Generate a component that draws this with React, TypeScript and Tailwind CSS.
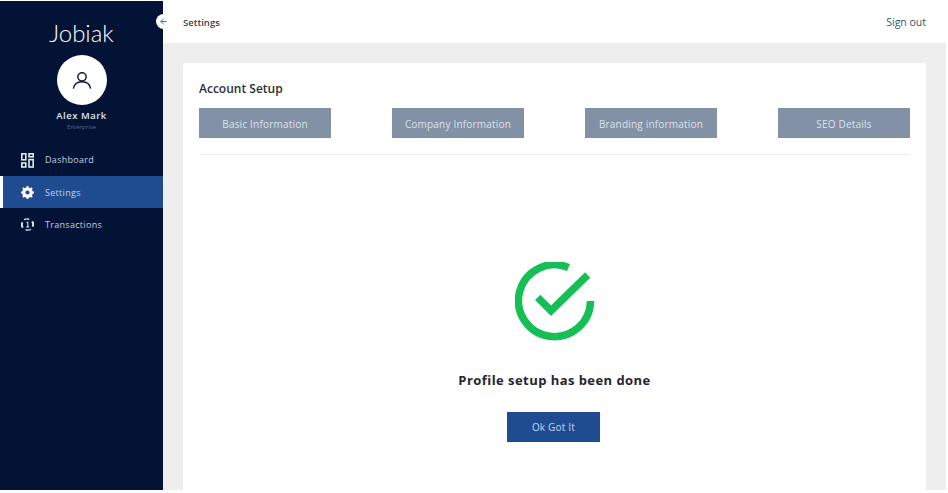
import { ArrowLeft } from "lucide-react";

const tabs = ["Basic Information", "Company Information", "Branding information", "SEO Details"];

function DashboardIcon() {
  return (
    <svg width="13" height="15" viewBox="0 0 13 15" fill="none" stroke="#dfe6f0" strokeWidth="1.6">
      <rect x="0.8" y="0.8" width="4" height="6" />
      <rect x="8" y="0.8" width="4.2" height="3" />
      <rect x="8" y="6.6" width="4.2" height="7.4" />
      <rect x="0.8" y="10" width="4" height="4" />
    </svg>
  );
}

function GearIcon() {
  return (
    <svg width="13" height="13" viewBox="0 0 13 13">
      <circle cx="6.5" cy="6.5" r="5.3" fill="#ffffff" />
      <g stroke="#ffffff" strokeWidth="1.9">
        <path d="M6.5 0v13" />
        <path d="M0 6.5h13" />
        <path d="M1.900 1.900l9.200 9.200" />
        <path d="M1.900 11.100l9.200-9.200" />
      </g>
      <circle cx="6.5" cy="6.5" r="2.1" fill="#1f4c91" />
    </svg>
  );
}

function TransactionsIcon() {
  return (
    <svg width="13" height="13" viewBox="0 0 13 13" fill="none" stroke="#dfe6f0" strokeWidth="1.3">
      <path d="M3 1.800A5.400 5.400 0 0 1 8.400 1.400" />
      <path d="M11.200 3.400A5.400 5.400 0 0 1 11.600 8.600" strokeWidth="2" />
      <path d="M10 11.200A5.400 5.400 0 0 1 4.600 11.600" />
      <path d="M1.800 9.600A5.400 5.400 0 0 1 1.400 4.400" strokeWidth="2" />
      <path d="M5.400 4.200h1.400v4.800M5.200 9h3" strokeWidth="1.100" />
    </svg>
  );
}

export default function App() {
  return (
    <div className="flex h-[493px] w-[948px] overflow-hidden bg-white pt-px pb-[3px] pr-[2px] font-['Open_Sans',sans-serif]">
      {/* Sidebar */}
      <aside className="relative flex w-[163px] shrink-0 flex-col bg-[#021336]">
        <div className="mt-[17px] text-center font-['Lato',sans-serif] text-[24px] leading-[30px] font-light text-white">
          Jobiak
        </div>
        <div className="mx-auto mt-[7px] flex h-[50px] w-[50px] items-center justify-center rounded-full bg-white">
          <svg width="20" height="21" viewBox="0 0 22 22" fill="none" stroke="#0b1a38" strokeWidth="1.6">
            <circle cx="11" cy="7" r="4.600" />
            <path d="M1.500 20c.8-5 4.800-7.600 9.500-7.600s8.700 2.600 9.500 7.600" />
          </svg>
        </div>
        <div className="mt-[4px] text-center text-[9.500px] leading-[14px] font-semibold tracking-[0.5px] text-[#dfe6f0]">
          Alex Mark
        </div>
        <div className="text-center text-[6px] leading-[8px] text-[#5c6a85]">Enterprise</div>

        <nav className="mt-[13px] flex flex-col text-[9px] tracking-[0.3px] text-[#c6d0e0]">
          <div className="flex h-[32px] items-center gap-[11px] pl-[21px]">
            <DashboardIcon />
            <span>Dashboard</span>
          </div>
          <div className="flex h-[32px] items-center gap-[11px] border-l-[3px] border-white bg-[#1f4c91] pl-[18px]">
            <GearIcon />
            <span className="pt-px">Settings</span>
          </div>
          <div className="flex h-[32px] items-center gap-[11px] pl-[21px]">
            <TransactionsIcon />
            <span className="pt-px">Transactions</span>
          </div>
        </nav>

        <div className="absolute top-[13px] right-[-8px] z-10 flex h-[15px] w-[15px] items-center justify-center rounded-full bg-white">
          <ArrowLeft size={9} strokeWidth={2.5} className="text-[#4b5fa8]" />
        </div>
      </aside>

      {/* Main */}
      <div className="flex min-w-0 flex-1 flex-col bg-[#eeeeee]">
        <header className="flex h-[42px] shrink-0 items-center justify-between bg-white pr-[20px] pl-[20px]">
          <span className="pt-[2px] text-[9.500px] font-semibold text-[#3a3f47]">Settings</span>
          <span className="pt-[2px] text-[10.500px] text-[#1f5a70]">Sign out</span>
        </header>

        <main className="flex min-h-0 flex-1 flex-col pt-[20px] pr-[20px] pl-[20px]">
          <section className="flex flex-1 flex-col rounded-t-[2px] bg-white px-[16px]">
            <h2 className="mt-[17px] text-[12px] leading-[17px] font-semibold text-[#2b2f36]">Account Setup</h2>
            <div className="mt-[11px] flex justify-between">
              {tabs.map((tab) => (
                <div
                  key={tab}
                  className="flex h-[30px] w-[132px] items-center justify-center bg-[#8291a6] pt-[2px] text-[10px] tracking-[0.2px] text-[#dde3ea]"
                >
                  {tab}
                </div>
              ))}
            </div>
            <div className="mt-[16px] h-px bg-[#eeeeee]" />

            <div className="flex flex-col items-center">
              <svg className="mt-[107px]" width="80" height="80" viewBox="0 0 80 80" fill="none" stroke="#16bf55" strokeWidth="7.500">
                <path d="M53.500 5.500A36 36 0 1 0 75.500 39" />
                <path d="M22.700 35.300 L36 48.700 L72.700 13" />
              </svg>
              <p className="mt-[29px] text-[13px] leading-[18px] font-bold tracking-[0.45px] text-[#23272e]">
                Profile setup has been done
              </p>
              <button className="mt-[23px] mr-[2px] h-[30px] w-[93px] bg-[#1f4c91] text-[10px] tracking-[0.2px] text-[#c9d6ea]">
                Ok Got It
              </button>
            </div>
          </section>
        </main>
      </div>
    </div>
  );
}
